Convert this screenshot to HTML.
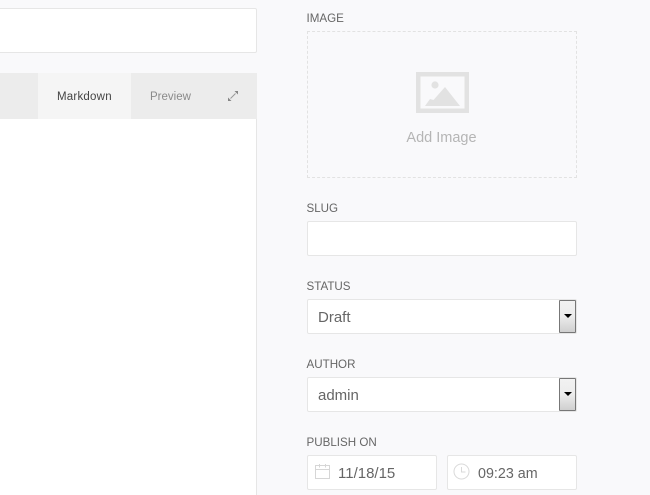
<!DOCTYPE html>
<html>
<head>
<meta charset="utf-8">
<style>
html,body{margin:0;padding:0}
body{width:650px;height:495px;overflow:hidden;background:#f9f9fb;position:relative;font-family:"Liberation Sans",sans-serif;color:#666}
.a{position:absolute;box-sizing:border-box}
.t{position:absolute;white-space:nowrap;line-height:16px}
.lab{font-size:11.6px;color:#666;left:306.5px}
.inp{background:#fff;border:1px solid #e6e6e6;border-radius:2px}
.val{font-size:15px;color:#666;line-height:20px}
.btn{left:559px;width:17px;border:1px solid #777;border-radius:1px;background:linear-gradient(#f2f2f2 0%,#ececec 50%,#cfcfcf 100%)}
.arr{left:564px;width:0;height:0;border-left:4px solid transparent;border-right:4px solid transparent;border-top:4px solid #000}
</style>
</head>
<body>
<!-- left column -->
<div class="a inp" style="left:-3px;top:8px;width:260px;height:45px"></div>
<div class="a" style="left:0;top:73px;width:257px;height:422px;background:#fff;border-right:1px solid #e6e6e6"></div>
<div class="a" style="left:0;top:73px;width:257px;height:46px;background:#ececec"></div>
<div class="a" style="left:38px;top:73px;width:93px;height:46px;background:#f5f5f5"></div>
<div class="t" style="left:57px;top:89px;font-size:11.5px;color:#444;letter-spacing:.22px">Markdown</div>
<div class="t" style="left:150px;top:89px;font-size:11.5px;color:#8a8a8a">Preview</div>
<svg class="a" style="left:227px;top:90px" width="12" height="12" viewBox="0 0 12 12">
<path d="M7.500 1H11v3.500zM1 7.500V11h3.500z" fill="#858585"/><path d="M3.500 8.500l5-5" stroke="#999" stroke-width="1" fill="none"/>
</svg>

<!-- image -->
<div class="t lab" style="top:11px">IMAGE</div>
<div class="a" style="left:307px;top:31px;width:270px;height:147px;border:1px dashed #e2e2e2"></div>
<svg class="a" style="left:416px;top:72px" width="53" height="41" viewBox="0 0 53 41">
<path fill-rule="evenodd" d="M0 0h53v41H0zM4.500 4.500v32h44v-32z" fill="#e2e2e2"/>
<circle cx="19" cy="13" r="3.600" fill="#e2e2e2"/>
<path d="M9 34l5-7 3.500 1L29 15l15 19z" fill="#e2e2e2"/>
</svg>
<div class="t" style="left:306.500px;width:270px;text-align:center;top:130px;font-size:14.500px;color:#b5b5b5">Add Image</div>

<!-- slug -->
<div class="t lab" style="top:201px">SLUG</div>
<div class="a inp" style="left:307px;top:221px;width:270px;height:35px"></div>

<!-- status -->
<div class="t lab" style="top:279px">STATUS</div>
<div class="a inp" style="left:307px;top:299px;width:270px;height:35px"></div>
<div class="t val" style="left:318px;top:308px">Draft</div>
<div class="a btn" style="top:300px;height:33px"></div>
<div class="a arr" style="top:314px"></div>

<!-- author -->
<div class="t lab" style="top:357px">AUTHOR</div>
<div class="a inp" style="left:307px;top:377px;width:270px;height:35px"></div>
<div class="t val" style="left:318px;top:386px">admin</div>
<div class="a btn" style="top:378px;height:33px"></div>
<div class="a arr" style="top:392px"></div>

<!-- publish -->
<div class="t lab" style="top:435px">PUBLISH ON</div>
<div class="a inp" style="left:307px;top:455px;width:130px;height:35px"></div>
<svg class="a" style="left:315px;top:464px" width="15" height="16" viewBox="0 0 15 16" fill="none" stroke="#d6d6d6">
<path d="M.5 1.500h14v13H.5zM.5 5.500h14M4.500 0v3.500M10.500 0v3.500"/>
</svg>
<div class="t val" style="left:338px;top:464px">11/18/15</div>
<div class="a inp" style="left:447px;top:455px;width:130px;height:35px"></div>
<svg class="a" style="left:453px;top:463px" width="17" height="17" viewBox="0 0 17 17" fill="none" stroke="#d9d9d9">
<circle cx="8.500" cy="8.500" r="7.500"/><path d="M8.500 4v5h4"/>
</svg>
<div class="t val" style="left:478px;top:464px;font-size:14.3px">09:23 am</div>
</body>
</html>
